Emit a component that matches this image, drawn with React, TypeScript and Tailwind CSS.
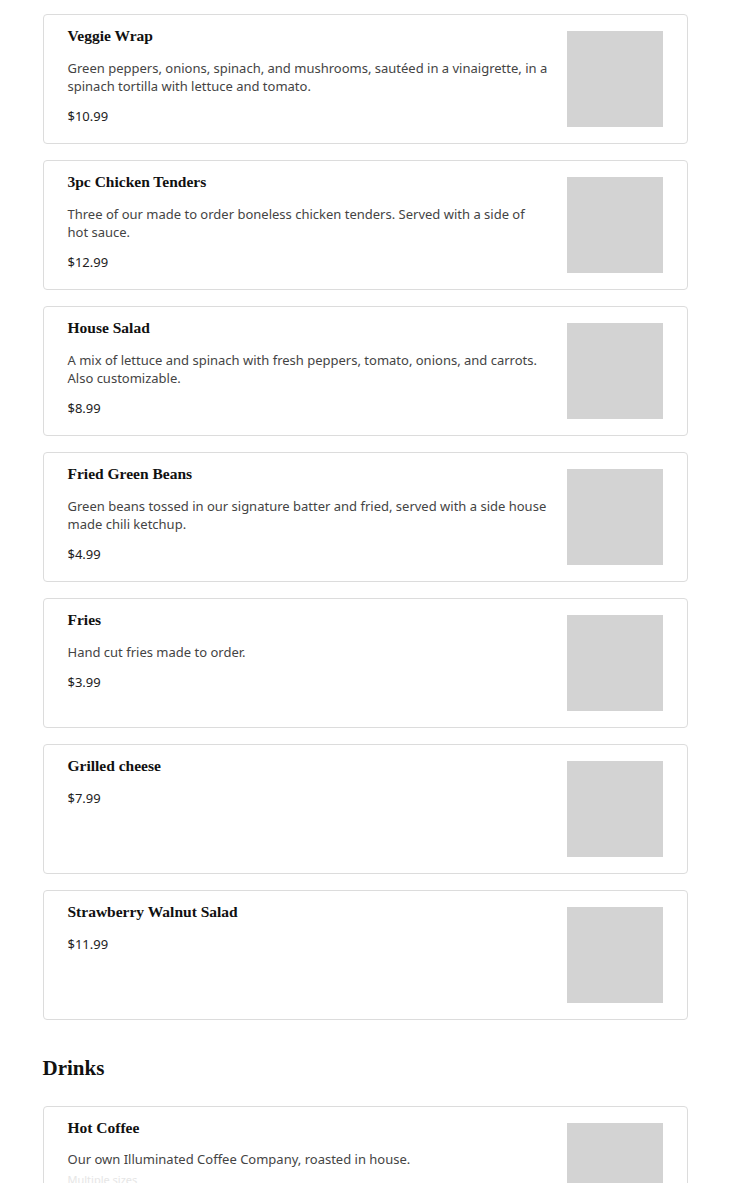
const items = [
  {
    name: 'Veggie Wrap',
    desc: 'Green peppers, onions, spinach, and mushrooms, sautéed in a vinaigrette, in a spinach tortilla with lettuce and tomato.',
    price: '$10.99',
  },
  {
    name: '3pc Chicken Tenders',
    desc: 'Three of our made to order boneless chicken tenders. Served with a side of hot sauce.',
    price: '$12.99',
  },
  {
    name: 'House Salad',
    desc: 'A mix of lettuce and spinach with fresh peppers, tomato, onions, and carrots. Also customizable.',
    price: '$8.99',
  },
  {
    name: 'Fried Green Beans',
    desc: 'Green beans tossed in our signature batter and fried, served with a side house made chili ketchup.',
    price: '$4.99',
  },
  { name: 'Fries', desc: 'Hand cut fries made to order.', price: '$3.99' },
  { name: 'Grilled cheese', price: '$7.99' },
  { name: 'Strawberry Walnut Salad', price: '$11.99' },
];

type Item = { name: string; desc?: string; price: string };

function MenuCard({ item }: { item: Item }) {
  return (
    <div className="flex items-center gap-[19px] rounded-[4px] border border-[#dcdcdc] bg-white px-6 py-[15px] min-h-[130px]">
      <div className="mt-[-4px] flex flex-1 flex-col self-start">
        <h3 className="font-['Liberation_Serif',serif] text-[15.5px] font-bold leading-5 text-[#111]">{item.name}</h3>
        {item.desc && (
          <p className="mt-[13px] text-[13px] leading-[18px] text-[#444]">{item.desc}</p>
        )}
        <p className={item.desc ? 'mt-3 text-[13px] leading-[18px] text-[#222]' : 'mt-[13px] text-[13px] leading-[18px] text-[#222]'}>
          {item.price}
        </p>
      </div>
      <div className="h-24 w-24 shrink-0 bg-[#d3d3d3]" />
    </div>
  );
}

export default function App() {
  return (
    <div className="min-h-screen bg-white font-['Noto_Sans',sans-serif]">
      <div className="mx-auto w-[645px] pt-[14px]">
        <div className="flex flex-col gap-4">
          {items.map((item) => (
            <MenuCard key={item.name} item={item} />
          ))}
        </div>

        <h2 className="mt-[34px] mb-6 font-['Liberation_Serif',serif] text-[21px] font-bold leading-7 text-[#111]">
          Drinks
        </h2>

        <div className="flex flex-col gap-4">
          <div className="flex items-start gap-[19px] rounded-[4px] border border-[#dcdcdc] bg-white px-6 pt-4 pb-[15px]">
            <div className="mt-[-5px] flex flex-1 flex-col">
              <h3 className="font-['Liberation_Serif',serif] text-[15.5px] font-bold leading-5 text-[#111]">Hot Coffee</h3>
              <p className="mt-3 text-[13px] leading-[18px] text-[#444]">
                Our own Illuminated Coffee Company, roasted in house.
              </p>
              <p className="mt-1 text-[11px] leading-4 text-[#e6e6e6]">Multiple sizes</p>
            </div>
            <div className="h-24 w-24 shrink-0 bg-[#d3d3d3]" />
          </div>
        </div>
      </div>
    </div>
  );
}
